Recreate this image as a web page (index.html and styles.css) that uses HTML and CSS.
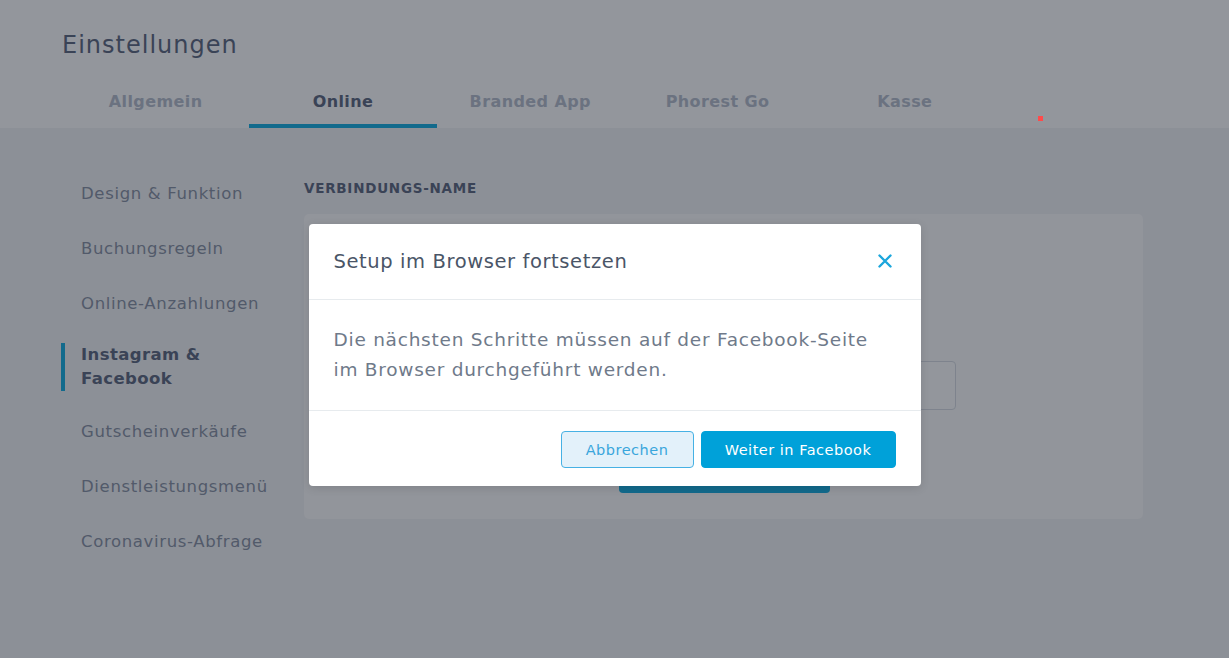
FILE: index.html
```html
<!DOCTYPE html>
<html lang="de">
<head>
<meta charset="utf-8">
<title>Einstellungen</title>
<link rel="stylesheet" href="styles.css">
</head>
<body>
<div class="page">
  <header class="header">
    <h1 class="title">Einstellungen</h1>
    <nav class="tabs">
      <a class="tab">Allgemein</a>
      <a class="tab active">Online</a>
      <a class="tab">Branded App</a>
      <a class="tab">Phorest Go</a>
      <a class="tab">Kasse</a>
    </nav>
  </header>
  <main class="main">
    <aside class="sidebar">
      <a class="side-item">Design &amp; Funktion</a>
      <a class="side-item">Buchungsregeln</a>
      <a class="side-item">Online-Anzahlungen</a>
      <a class="side-item active">Instagram &amp;<br>Facebook</a>
      <a class="side-item">Gutscheinverkäufe</a>
      <a class="side-item">Dienstleistungsmenü</a>
      <a class="side-item">Coronavirus-Abfrage</a>
    </aside>
    <section class="content">
      <h2 class="label">VERBINDUNGS-NAME</h2>
      <div class="card">
        <div class="field-row">
          <div class="input"></div>
        </div>
        <div class="btn-row">
          <div class="connect-btn"></div>
        </div>
      </div>
    </section>
  </main>
</div>

<div class="overlay">
  <div class="modal">
    <div class="modal-head">
      <h3 class="modal-title">Setup im Browser fortsetzen</h3>
      <button class="close" aria-label="Schließen">
        <svg width="14" height="14" viewBox="0 0 14 14"><path d="M1.5 1.5 L12.5 12.5 M12.5 1.5 L1.5 12.5" stroke="#1ba6dc" stroke-width="2.4" stroke-linecap="round" fill="none"/></svg>
      </button>
    </div>
    <div class="modal-body">
      <p>Die nächsten Schritte müssen auf der Facebook-Seite im Browser durchgeführt werden.</p>
    </div>
    <div class="modal-foot">
      <button class="btn btn-secondary">Abbrechen</button>
      <button class="btn btn-primary">Weiter in Facebook</button>
    </div>
  </div>
</div>
<div class="red-dot"></div>
</body>
</html>
```

FILE: styles.css
```css
* { box-sizing: border-box; }
html, body { margin: 0; padding: 0; }
body {
  font-family: "DejaVu Sans", "Noto Sans", sans-serif;
  background: #f2f3f5;
  width: 1229px;
  height: 658px;
  overflow: hidden;
  position: relative;
}
.page { min-height: 658px; }

.header {
  background: #ffffff;
  padding: 29px 0 0 62px;
  height: 128px;
}
.title {
  margin: 0;
  font-size: 24px;
  font-weight: 400;
  color: #55617a;
  line-height: 32px;
  letter-spacing: 1px;
}
.tabs {
  display: flex;
  margin-top: 24px;
}
.tab {
  width: 187.3px;
  text-align: center;
  font-size: 16px;
  font-weight: 700;
  color: #b2bbca;
  height: 43px;
  line-height: 34px;
  border-bottom: 4px solid transparent;
  letter-spacing: 0.4px;
}
.tab.active {
  color: #55617a;
  border-bottom-color: #09abe1;
}

.main {
  display: flex;
  padding: 0 0 0 61px;
}
.sidebar {
  width: 243px;
  display: flex;
  flex-direction: column;
  padding-top: 54px;
}
.side-item {
  font-size: 16.5px;
  color: #838da0;
  border-left: 4px solid transparent;
  padding-left: 16px;
  line-height: 24px;
  margin-bottom: 31px;
  letter-spacing: 0.65px;
  white-space: nowrap;
}
.side-item.active {
  font-weight: 700;
  color: #55617a;
  border-left-color: #09abe1;
  margin-top: -4px;
  margin-bottom: 29px;
  letter-spacing: 0.4px;
}

.content {
  width: 839px;
  padding-top: 50px;
}
.label {
  margin: 0 0 16px 0;
  font-size: 13.5px;
  font-weight: 700;
  color: #55617a;
  line-height: 20px;
  letter-spacing: 0.75px;
}
.card {
  background: #fdfdfd;
  border-radius: 5px;
  height: 305px;
  padding: 147px 187px 0 0;
  display: flex;
  flex-direction: column;
  align-items: flex-end;
}
.input {
  width: 340px;
  height: 49px;
  border: 1px solid #d6dbe2;
  border-radius: 4px;
  background: #fff;
}
.btn-row {
  margin-top: 36px;
  width: 525px;
  display: flex;
  justify-content: flex-end;
  padding-right: 126px;
}
.connect-btn {
  width: 211px;
  height: 47px;
  background: #09abe1;
  border-radius: 4px;
}

.overlay {
  position: absolute;
  inset: 0;
  background: rgba(30, 35, 48, 0.48);
  display: flex;
  justify-content: center;
  align-items: flex-start;
  padding-top: 224px;
}
.modal {
  width: 612px;
  background: #ffffff;
  border-radius: 4px;
  box-shadow: 0 2px 10px rgba(0,0,0,0.12);
}
.modal-head {
  height: 76px;
  display: flex;
  align-items: center;
  justify-content: space-between;
  padding: 0 29px 1px 25px;
  border-bottom: 1px solid #e7ebee;
}
.modal-title {
  margin: 0;
  font-size: 19.5px;
  font-weight: 400;
  color: #4a5567;
  letter-spacing: 0.6px;
}
.close {
  border: 0;
  background: none;
  padding: 0;
  width: 14px;
  height: 14px;
  display: flex;
}
.modal-body {
  padding: 25px 25px 25px 25px;
  border-bottom: 1px solid #e7ebee;
}
.modal-body p {
  margin: 0;
  font-size: 18.5px;
  line-height: 30px;
  color: #6f7a8a;
  letter-spacing: 0.75px;
}
.modal-foot {
  display: flex;
  justify-content: flex-end;
  gap: 7px;
  padding: 20px 25px 18px 25px;
}
.btn {
  font-family: inherit;
  height: 37px;
  border-radius: 4px;
  font-size: 14.5px;
  letter-spacing: 0.5px;
  cursor: pointer;
  padding: 0;
}
.btn-secondary {
  width: 133px;
  background: #e3f1fa;
  border: 1px solid #46b1e4;
  color: #3aa6dc;
}
.btn-primary {
  width: 195px;
  background: #00a1d9;
  border: 1px solid #00a1d9;
  color: #ffffff;
}
.red-dot {
  position: absolute;
  left: 1038px;
  top: 116px;
  width: 5px;
  height: 5px;
  background: #ff4a4a;
}
```
